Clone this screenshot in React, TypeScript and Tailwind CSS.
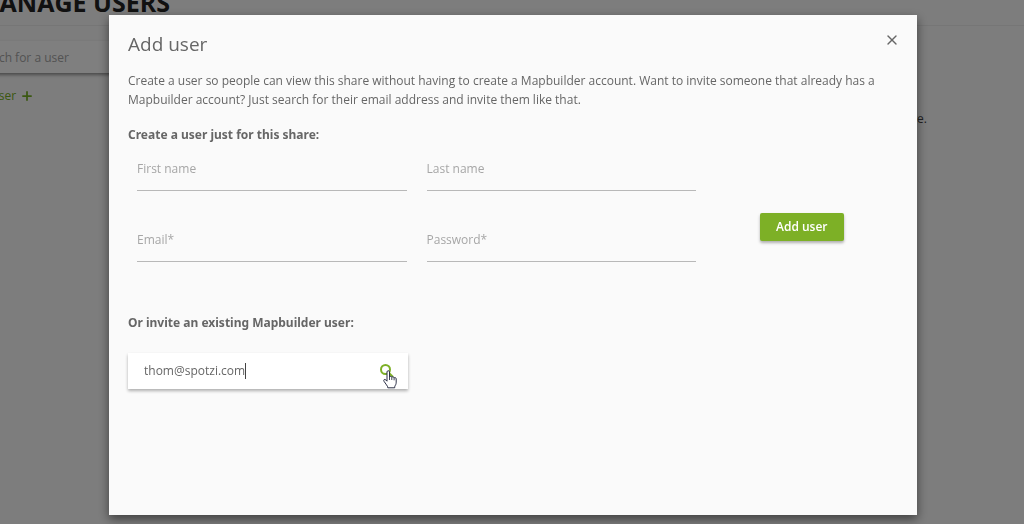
import { Plus, X } from "lucide-react";

type FieldProps = { id: string; label: string; type?: string };

function Field({ id, label, type = "text" }: FieldProps) {
  return (
    <div>
      <label htmlFor={id} className="sr-only">
        {label}
      </label>
      <input
        id={id}
        type={type}
        placeholder={label}
        className="block h-11 w-full border-b border-[#b8b8b8] bg-transparent text-[12px] text-[#666] outline-none placeholder:text-[#a6a6a6] placeholder:opacity-100"
      />
    </div>
  );
}

function HandPointer() {
  return (
    <svg viewBox="0 0 14 19" className="pointer-events-none absolute top-[17px] right-[11px] h-[19px] w-[14px]" aria-hidden="true">
      <path
        d="M4 1.900C4 .3 6.500.3 6.500 1.900V7c.3-1.100 2.300-.9 2.300.4.4-1 2.300-.7 2.300.6.5-.8 2.100-.5 2.100.9v3.200c0 1.900-.5 2.700-1.200 3.800-.3.5-.3 1.100-.3 1.900H4.800c0-1.200-.5-1.900-1.300-2.900L1 11.300c-.9-1.400.7-2.600 1.800-1.400L4 11.200z"
        fill="#fff"
        stroke="#2b2f45"
        strokeWidth="1"
        strokeLinejoin="round"
      />
      <path d="M6.500 7v3M8.800 7.400V10M11.100 8v2.300" stroke="#2b2f45" strokeWidth="0.9" fill="none" />
    </svg>
  );
}

function ManageUsersPage() {
  return (
    <main className="h-screen overflow-hidden bg-[#fafafa]">
      <header className="flex h-[26px] items-start border-b border-[#ececec]">
        <h1 className="-mt-[14px] -ml-6 text-[25px] leading-8 font-bold whitespace-nowrap text-[#222]">MANAGE USERS</h1>
      </header>
      <div className="flex items-start justify-between pt-[15px]">
        <div className="-ml-[34px]">
          <label htmlFor="find-user" className="sr-only">
            Search for a user
          </label>
          <input
            id="find-user"
            placeholder="Search for a user"
            className="block h-8 w-[280px] bg-white pl-2 text-[12px] shadow-[0_2px_3px_rgba(0,0,0,0.4)] outline-none placeholder:text-[#a6a6a6] placeholder:opacity-100"
          />
          <button type="button" className="mt-[13px] flex items-center gap-1 text-[12px] leading-5 text-[#76b023]">
            Add user
            <Plus size={14} strokeWidth={3} aria-hidden="true" />
          </button>
        </div>
        <p className="mt-[68px] mr-[97px] text-[12px] leading-5 text-[#444]">Select a user to manage.</p>
      </div>
    </main>
  );
}

export default function App() {
  return (
    <div className="font-['Open_Sans','Noto_Sans',sans-serif]">
      <ManageUsersPage />
      <div className="fixed inset-0 bg-black/50 pt-[15px] pr-[107px] pb-[9px] pl-[109px]">
        <section
          role="dialog"
          aria-modal="true"
          aria-labelledby="dialog-title"
          className="h-full bg-[#fafafa] px-[19px] text-[12px] text-[#666] shadow-[0_4px_10px_rgba(0,0,0,0.5)]"
        >
          <div className="flex items-start justify-between pt-[15px]">
            <h2 id="dialog-title" className="text-[19px] leading-7">
              Add user
            </h2>
            <button type="button" aria-label="Close" className="-mr-1 p-0.5">
              <X size={16} strokeWidth={2} />
            </button>
          </div>
          <p className="mt-[13px] max-w-[750px] leading-[19px]">
            Create a user so people can view this share without having to create a Mapbuilder account. Want to invite someone that already has a
            Mapbuilder account? Just search for their email address and invite them like that.
          </p>
          <form className="mt-4" onSubmit={(event) => event.preventDefault()}>
            <h3 className="font-['Noto_Sans',sans-serif] leading-5 font-bold">Create a user just for this share:</h3>
            <div className="flex items-center">
              <div className="mt-[2px] ml-[9px] grid w-[559px] grid-cols-2 gap-x-5 gap-y-[27px]">
                <Field id="first-name" label="First name" />
                <Field id="last-name" label="Last name" />
                <Field id="email" label="Email*" type="email" />
                <Field id="password" label="Password*" type="password" />
              </div>
              <button
                type="submit"
                className="mt-[46px] ml-16 h-7 rounded-xs bg-[#7db026] px-4 font-semibold text-white shadow-[0_2px_3px_rgba(0,0,0,0.3)]"
              >
                Add user
              </button>
            </div>
          </form>
          <form className="mt-[51px]" onSubmit={(event) => event.preventDefault()}>
            <label htmlFor="existing-user" className="block font-['Noto_Sans',sans-serif] leading-5 font-bold">
              Or invite an existing Mapbuilder user:
            </label>
            <div className="relative mt-5 flex h-9 w-[280px] items-center bg-white pr-[13px] pl-4 shadow-[0_2px_3px_rgba(0,0,0,0.3)]">
              <input id="existing-user" defaultValue="thom@spotzi.com" className="min-w-0 flex-1 bg-transparent outline-none" />
              <span aria-hidden="true" className="absolute left-[117px] h-4 w-px bg-[#444]" />
              <button type="submit" aria-label="Search">
                <svg viewBox="0 0 15 15" className="size-[15px]" fill="none" stroke="#7db026" strokeWidth="2">
                  <circle cx="5.500" cy="5.500" r="4.500" />
                  <path d="M9 9l4 4" />
                </svg>
              </button>
              <HandPointer />
            </div>
          </form>
        </section>
      </div>
    </div>
  );
}
